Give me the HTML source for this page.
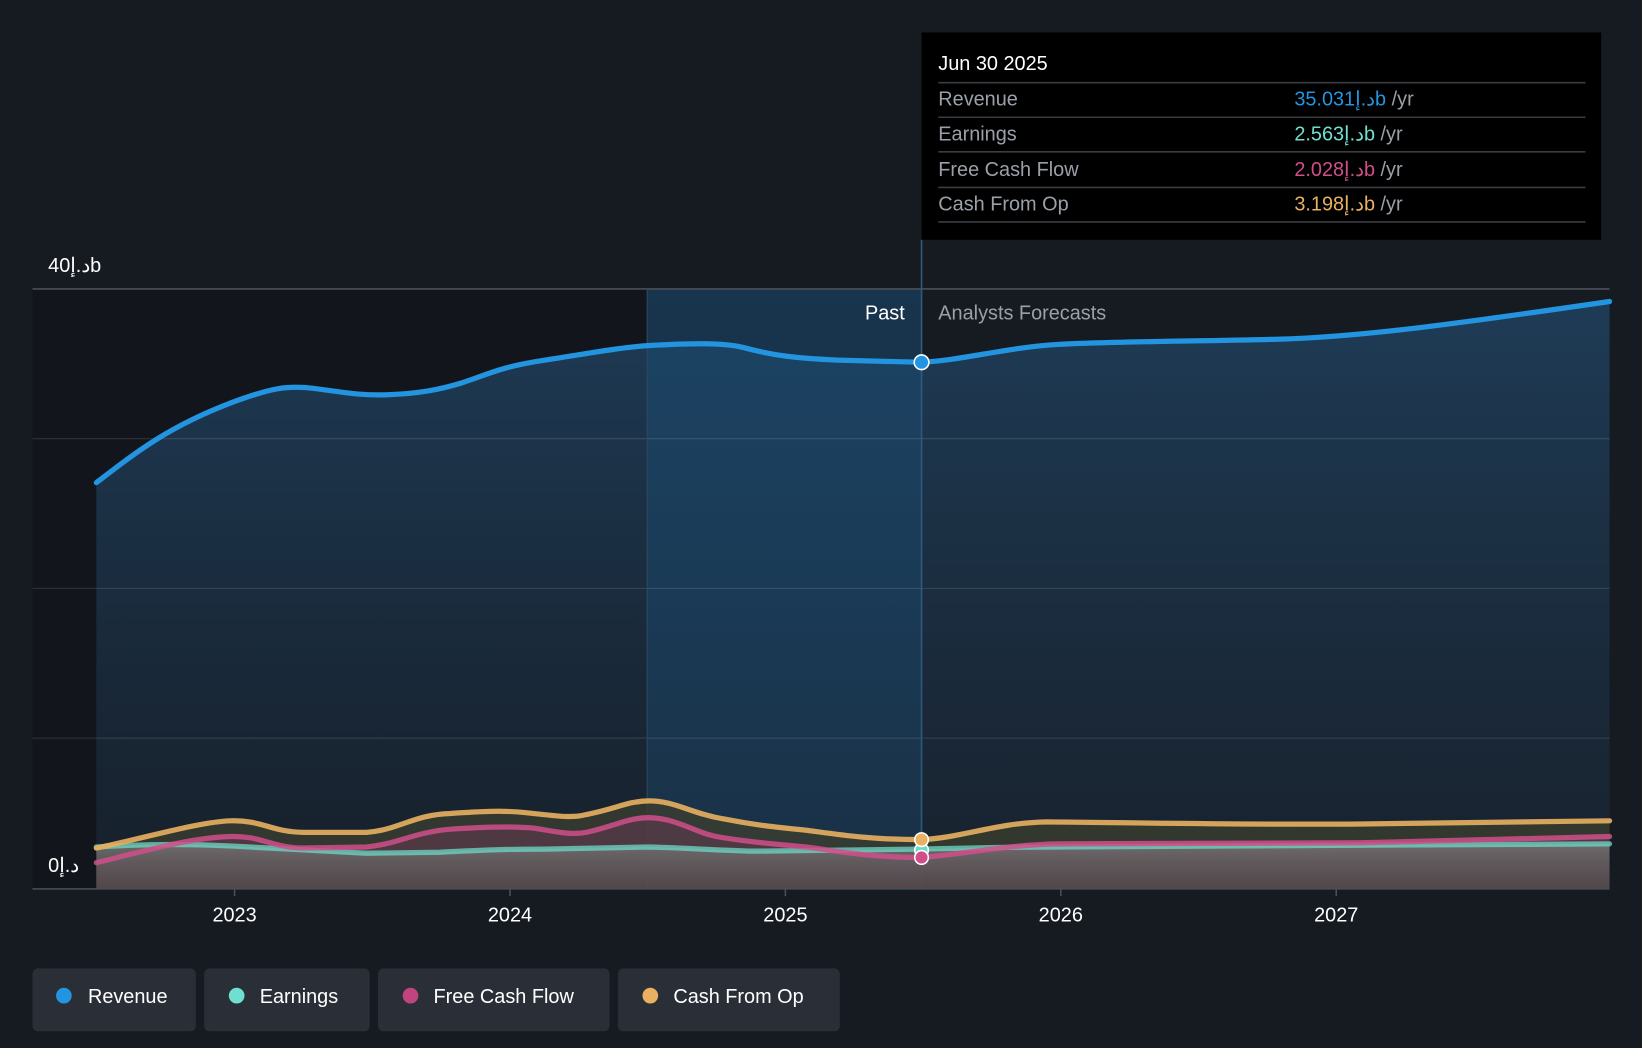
<!DOCTYPE html>
<html><head><meta charset="utf-8"><style>
html,body{margin:0;padding:0;background:#161b22;}
svg{display:block;font-family:"Liberation Sans","Noto Sans CJK SC",sans-serif;}
.o{unicode-bidi:bidi-override;direction:ltr;}
</style></head><body>
<svg width="1642" height="1048" viewBox="0 0 1568 1001" preserveAspectRatio="none">
<defs>
<linearGradient id="rev" x1="0" y1="0" x2="0" y2="1"><stop offset="0" stop-color="#1f3f5c" stop-opacity="0.9"/><stop offset="1" stop-color="#1a2736" stop-opacity="0.6"/></linearGradient>
<linearGradient id="hl" x1="0" y1="0" x2="0" y2="1"><stop offset="0" stop-color="#1a4a70" stop-opacity="0.55"/><stop offset="1" stop-color="#1a4a70" stop-opacity="0.35"/></linearGradient>
<linearGradient id="gr" x1="0" y1="0" x2="0" y2="1"><stop offset="0" stop-color="#777" stop-opacity="0.8"/><stop offset="1" stop-color="#555" stop-opacity="0.5"/></linearGradient>
</defs>
<rect width="1568" height="1001" fill="#161b22"/>
<rect x="31" y="276" width="587" height="573" fill="#12161c"/>
<path d="M92,461 C130,432 160,408 220,385 C260,370 275,368 300,371 C330,375 345,378 370,377 C400,376 420,372 440,366 C470,356 480,350 520,344 C560,338 590,332 620,330 C660,328 690,327 710,332 C740,340 760,342 800,344 L880,346 C920,344 960,332 1010,329 C1060,326 1150,326 1220,324 C1300,322 1400,308 1537,288 L1537,849 L92,849 Z" fill="url(#rev)"/>
<rect x="618" y="276" width="262" height="573" fill="url(#hl)"/>
<g stroke="#ffffff" stroke-opacity="0.13" stroke-width="1">
<line x1="31" y1="419" x2="1537" y2="419"/><line x1="31" y1="562" x2="1537" y2="562"/><line x1="31" y1="705" x2="1537" y2="705"/>
</g>
<line x1="31" y1="276" x2="1537" y2="276" stroke="#4a5058" stroke-width="1.5"/>
<line x1="618" y1="276" x2="618" y2="849" stroke="#2c4a62" stroke-width="1"/>
<line x1="880" y1="229" x2="880" y2="849" stroke="#2e5a7e" stroke-width="1.5"/>
<path d="M92,810 C140,800 190,785 220,784 C250,783 260,795 290,795 L350,795 C380,793 395,778 430,777 C460,775 480,774 500,776 C530,779 545,782 560,778 C590,772 600,765 620,765 C645,765 660,777 690,782 C720,788 740,790 770,793 C800,797 830,802 880,802 C920,800 950,786 1000,785 C1100,786 1200,788 1300,787 L1537,784 L1537,849 L92,849Z" fill="#3a3d30" opacity="0.8"/>
<path d="M92,824 C130,815 180,800 220,799 C250,798 260,810 290,810 L350,809 C380,806 395,795 430,792 C460,790 490,789 510,791 C530,794 545,798 560,795 C590,788 600,781 620,781 C650,782 665,797 690,800 C720,805 740,806 770,809 C800,813 830,819 880,819 C920,816 960,807 1010,806 L1300,805 L1537,799 L1537,849 L92,849Z" fill="#5a3b4a" opacity="0.7"/>
<path d="M92,809 C140,806 180,806 220,808 C260,810 300,812 350,815 L420,814 C460,812 480,811 520,811 L620,809 C660,810 680,812 720,813 L880,811 C920,810 960,809 1010,809 L1537,806 L1537,849 L92,849Z" fill="url(#gr)"/>
<g fill="none" stroke-width="5" stroke-linecap="round">
<path d="M92,809 C140,806 180,806 220,808 C260,810 300,812 350,815 L420,814 C460,812 480,811 520,811 L620,809 C660,810 680,812 720,813 L880,811 C920,810 960,809 1010,809 L1537,806" stroke="#6fd8c6" stroke-opacity="0.75"/>
<path d="M92,824 C130,815 180,800 220,799 C250,798 260,810 290,810 L350,809 C380,806 395,795 430,792 C460,790 490,789 510,791 C530,794 545,798 560,795 C590,788 600,781 620,781 C650,782 665,797 690,800 C720,805 740,806 770,809 C800,813 830,819 880,819 C920,816 960,807 1010,806 L1300,805 L1537,799" stroke="#d04f8a" stroke-opacity="0.85"/>
<path d="M92,810 C140,800 190,785 220,784 C250,783 260,795 290,795 L350,795 C380,793 395,778 430,777 C460,775 480,774 500,776 C530,779 545,782 560,778 C590,772 600,765 620,765 C645,765 660,777 690,782 C720,788 740,790 770,793 C800,797 830,802 880,802 C920,800 950,786 1000,785 C1100,786 1200,788 1300,787 L1537,784" stroke="#e8b060" stroke-opacity="0.9"/>
<path d="M92,461 C130,432 160,408 220,385 C260,370 275,368 300,371 C330,375 345,378 370,377 C400,376 420,372 440,366 C470,356 480,350 520,344 C560,338 590,332 620,330 C660,328 690,327 710,332 C740,340 760,342 800,344 L880,346 C920,344 960,332 1010,329 C1060,326 1150,326 1220,324 C1300,322 1400,308 1537,288" stroke="#2394e0"/>
</g>
<line x1="31" y1="849" x2="1537" y2="849" stroke="#4a5058" stroke-width="1.5"/>
<g stroke="#4a5058" stroke-width="1.5"><line x1="224" y1="849" x2="224" y2="856"/><line x1="487" y1="849" x2="487" y2="856"/><line x1="750" y1="849" x2="750" y2="856"/><line x1="1013" y1="849" x2="1013" y2="856"/><line x1="1276" y1="849" x2="1276" y2="856"/></g>
<g stroke="#fff" stroke-width="1.5"><circle cx="880" cy="346" r="7" fill="#2394e0"/><circle cx="880" cy="812" r="6.5" fill="#6fd8c6"/><circle cx="880" cy="802" r="6.5" fill="#e8b060"/><circle cx="880" cy="819" r="6.5" fill="#d04f8a"/></g>
<text class="o" x="46" y="260" fill="#fff" font-size="19">40إ.دb</text>
<text class="o" x="46" y="833" fill="#fff" font-size="19">0إ.د</text>
<text x="864" y="305" fill="#fff" font-size="19" text-anchor="end">Past</text>
<text x="896" y="305" fill="#9aa0a8" font-size="19">Analysts Forecasts</text>
<g fill="#fff" font-size="19" text-anchor="middle"><text x="224" y="880">2023</text><text x="487" y="880">2024</text><text x="750" y="880">2025</text><text x="1013" y="880">2026</text><text x="1276" y="880">2027</text></g>
<rect x="880" y="31" width="649" height="198" fill="#000"/>
<text x="896" y="67" fill="#fff" font-size="19">Jun 30 2025</text>
<g stroke="#3a3d42" stroke-width="1.5"><line x1="896" y1="79" x2="1514" y2="79"/><line x1="896" y1="112" x2="1514" y2="112"/><line x1="896" y1="145" x2="1514" y2="145"/><line x1="896" y1="179" x2="1514" y2="179"/><line x1="896" y1="212" x2="1514" y2="212"/></g>
<g font-size="19" fill="#9aa0a8"><text x="896" y="101">Revenue</text><text x="896" y="134">Earnings</text><text x="896" y="168">Free Cash Flow</text><text x="896" y="201">Cash From Op</text></g>
<g font-size="19"><text class="o" x="1236" y="101"><tspan fill="#2394e0">35.031إ.دb</tspan><tspan fill="#9aa0a8"> /yr</tspan></text>
<text class="o" x="1236" y="134"><tspan fill="#6fe0d0">2.563إ.دb</tspan><tspan fill="#9aa0a8"> /yr</tspan></text>
<text class="o" x="1236" y="168"><tspan fill="#d04f8a">2.028إ.دb</tspan><tspan fill="#9aa0a8"> /yr</tspan></text>
<text class="o" x="1236" y="201"><tspan fill="#e8b060">3.198إ.دb</tspan><tspan fill="#9aa0a8"> /yr</tspan></text></g>
<g fill="#2a2e36"><rect x="31" y="925" width="156" height="60" rx="5"/><rect x="195" y="925" width="158" height="60" rx="5"/><rect x="361" y="925" width="221" height="60" rx="5"/><rect x="590" y="925" width="212" height="60" rx="5"/></g>
<circle cx="61" cy="951" r="7.5" fill="#2394e0"/><circle cx="226" cy="951" r="7.5" fill="#6fe0d0"/><circle cx="392" cy="951" r="7.5" fill="#c2447f"/><circle cx="621" cy="951" r="7.5" fill="#e8b060"/>
<g fill="#fff" font-size="19"><text x="84" y="958">Revenue</text><text x="248" y="958">Earnings</text><text x="414" y="958">Free Cash Flow</text><text x="643" y="958">Cash From Op</text></g>
</svg>
</body></html>
